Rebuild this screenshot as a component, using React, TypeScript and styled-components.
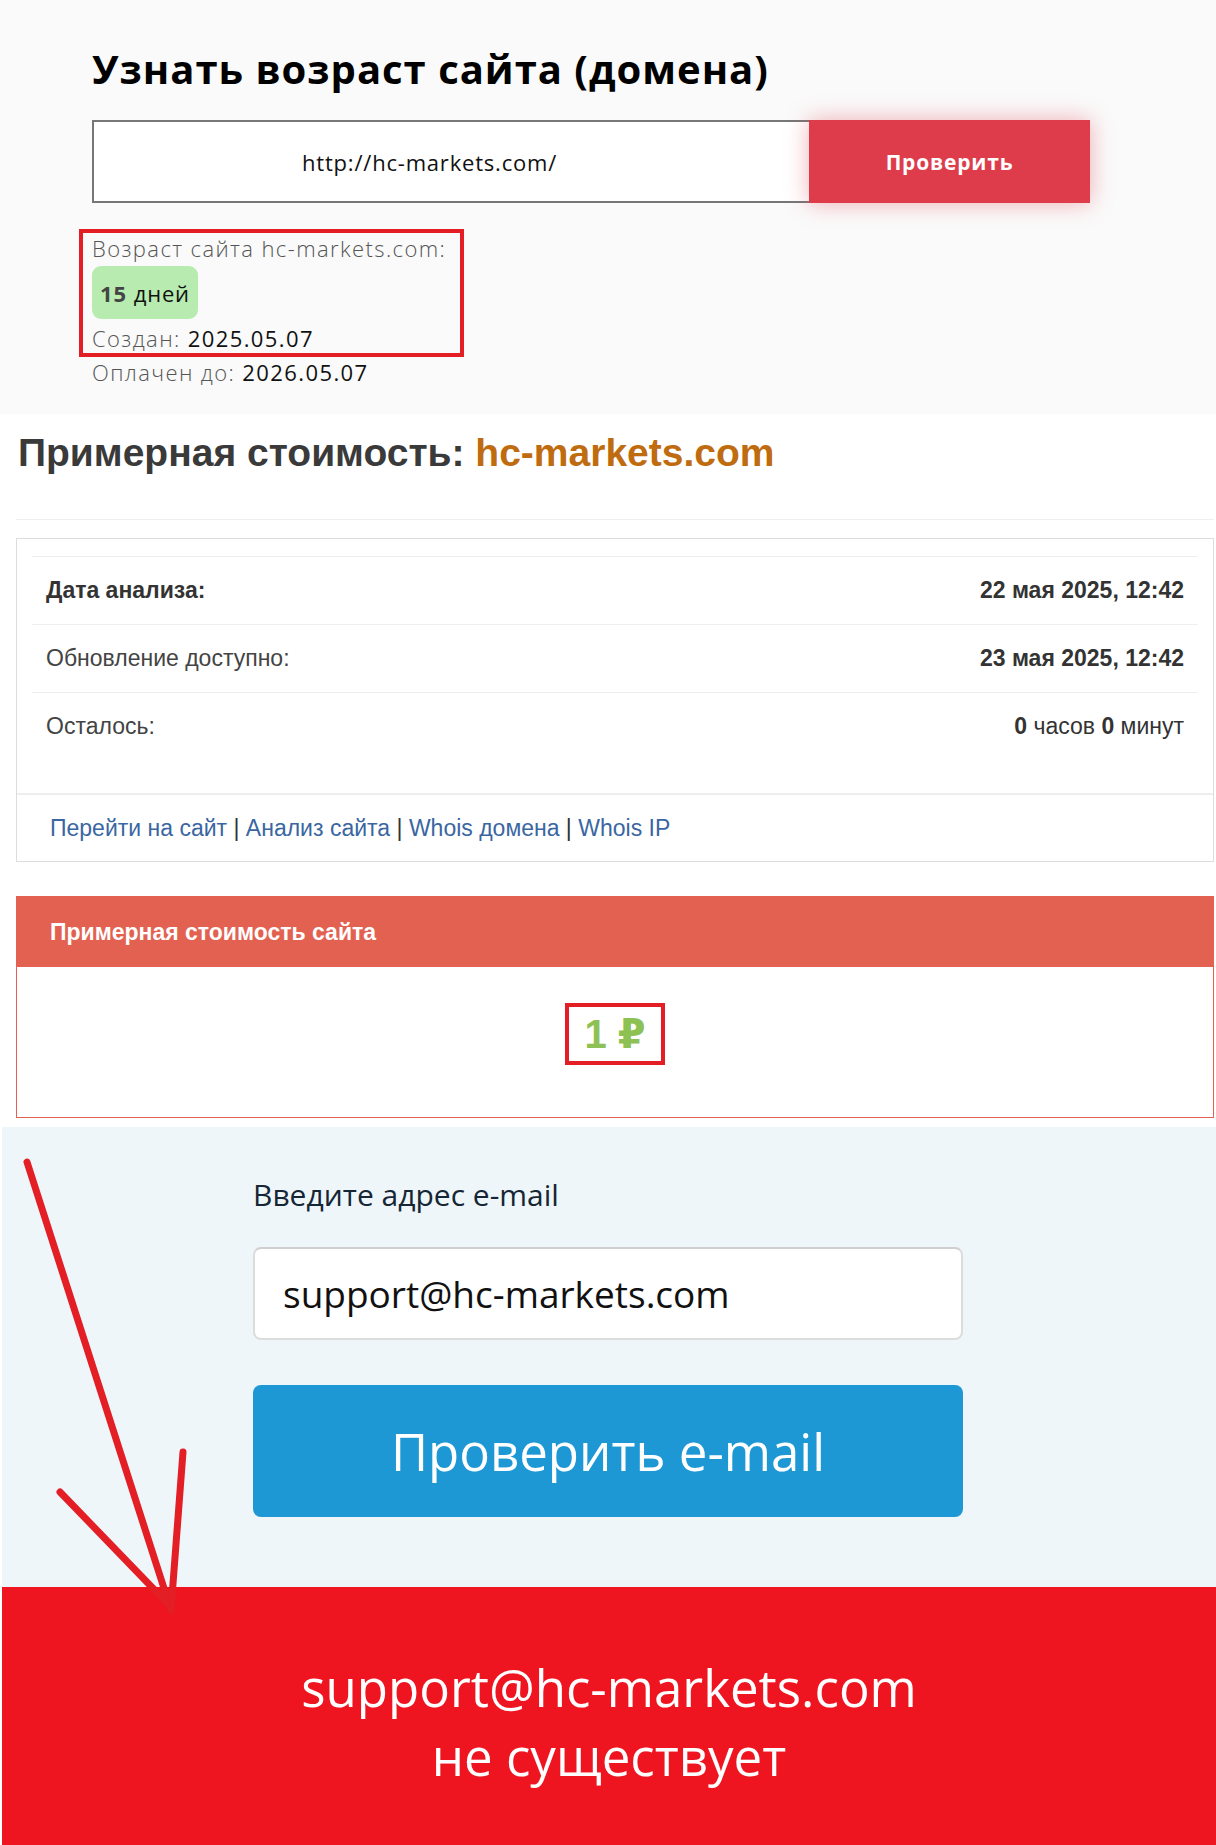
import React from "react";
import styled, { createGlobalStyle } from "styled-components";

const GlobalStyle = createGlobalStyle`
  html, body {
    margin: 0;
    padding: 0;
    background: #ffffff;
  }

  body {
    font-family: "Liberation Sans", Arial, sans-serif;
  }
`;

const annotationRed = "#e31e24";

type Row = {
  label: string;
  value: React.ReactNode;
  strongLabel?: boolean;
};

const rows: Row[] = [
  { label: "Дата анализа:", value: <b>22 мая 2025, 12:42</b>, strongLabel: true },
  { label: "Обновление доступно:", value: <b>23 мая 2025, 12:42</b> },
  {
    label: "Осталось:",
    value: (
      <>
        <b>0</b> часов <b>0</b> минут
      </>
    )
  }
];

const links = ["Перейти на сайт", "Анализ сайта", "Whois домена", "Whois IP"];

export default function App() {
  return (
    <Page>
      <GlobalStyle />

      <AgeSection>
        <AgeTitle>Узнать возраст сайта (домена)</AgeTitle>
        <SearchForm>
          <UrlInput readOnly value="http://hc-markets.com/" />
          <CheckButton type="button">Проверить</CheckButton>
        </SearchForm>
        <Highlight>
          <InfoLine>Возраст сайта hc-markets.com:</InfoLine>
          <AgeBadge>
            <b>15</b> дней
          </AgeBadge>
          <InfoLine>
            Создан: <span>2025.05.07</span>
          </InfoLine>
        </Highlight>
        <InfoLine>
          Оплачен до: <span>2026.05.07</span>
        </InfoLine>
      </AgeSection>

      <PriceSection>
        <PriceTitle>
          Примерная стоимость: <Domain>hc-markets.com</Domain>
        </PriceTitle>
        <Divider />
        <Card>
          <CardBody>
            {rows.map(row => (
              <TableRow key={row.label}>
                <RowLabel strong={row.strongLabel}>{row.label}</RowLabel>
                <RowValue>{row.value}</RowValue>
              </TableRow>
            ))}
          </CardBody>
          <CardFooter>
            {links.map((link, i) => (
              <React.Fragment key={link}>
                {i > 0 && <Separator> | </Separator>}
                <FooterLink href="#">{link}</FooterLink>
              </React.Fragment>
            ))}
          </CardFooter>
        </Card>

        <Panel>
          <PanelHeader>Примерная стоимость сайта</PanelHeader>
          <PanelBody>
            <PriceValue>1 ₽</PriceValue>
          </PanelBody>
        </Panel>
      </PriceSection>

      <EmailSection>
        <EmailForm>
          <EmailLabel>Введите адрес e-mail</EmailLabel>
          <EmailInput readOnly value="support@hc-markets.com" />
          <EmailButton type="button">Проверить e-mail</EmailButton>
        </EmailForm>
      </EmailSection>

      <ResultSection>
        <ResultText>
          support@hc-markets.com
          <br />
          не существует
        </ResultText>
      </ResultSection>

      <Arrow viewBox="0 0 200 490" width="200" height="490">
        <g stroke={annotationRed} strokeWidth="7" strokeLinecap="round" fill="none">
          <line x1="27" y1="22" x2="171" y2="470" />
          <line x1="60" y1="352" x2="171" y2="467" />
          <line x1="183" y1="312" x2="171" y2="470" />
        </g>
      </Arrow>
    </Page>
  );
}

const Page = styled.div`
  position: relative;
  width: 1216px;
  min-height: 1845px;
  background: #ffffff;
  overflow: hidden;
`;

/* --- age check block --- */

const AgeSection = styled.section`
  background: #fafafa;
  height: 414px;
  box-sizing: border-box;
  padding: 46px 0 0 92px;
  font-family: "Open Sans", "Liberation Sans", sans-serif;
`;

const AgeTitle = styled.h1`
  margin: 0;
  font-size: 40px;
  line-height: 46px;
  font-weight: 700;
  color: #000;
  letter-spacing: 1px;
`;

const SearchForm = styled.div`
  display: flex;
  margin-top: 28px;
  height: 83px;
`;

const UrlInput = styled.input`
  width: 717px;
  height: 83px;
  box-sizing: border-box;
  border: 2px solid #777;
  border-right: none;
  background: #fff;
  padding: 0 0 0 208px;
  font-family: "Open Sans", sans-serif;
  font-size: 22px;
  letter-spacing: 0.8px;
  color: #111;
  outline: none;
`;

const CheckButton = styled.button`
  width: 281px;
  height: 83px;
  border: none;
  background: #de3c4b;
  color: #fff;
  font-family: "Open Sans", sans-serif;
  font-weight: 700;
  font-size: 21px;
  letter-spacing: 0.8px;
  box-shadow: 0 0 22px rgba(226, 60, 75, 0.4);
`;

const Highlight = styled.div`
  display: inline-flex;
  flex-direction: column;
  align-items: flex-start;
  margin: 26px 0 0 -13px;
  padding: 0 9px;
  border: 4px solid ${annotationRed};
  width: 385px;
  box-sizing: border-box;
`;

const InfoLine = styled.div`
  font-size: 22px;
  line-height: 30px;
  font-weight: 300;
  letter-spacing: 1.4px;
  color: #555;

  span {
    color: #111;
    font-weight: 500;
  }
`;

const AgeBadge = styled.div`
  display: flex;
  align-items: center;
  gap: 7px;
  margin: 3px 0 4px;
  height: 53px;
  padding: 0 8px;
  border-radius: 9px;
  background: #b7ebb0;
  font-size: 22px;
  letter-spacing: 0.8px;
  color: #111;
  font-weight: 500;

  b {
    color: #444;
    font-weight: 700;
  }
`;

/* --- price block --- */

const PriceSection = styled.section`
  margin-left: 2px;
  padding: 17px 2px 9px 14px;
`;

const PriceTitle = styled.h2`
  margin: 0;
  font-size: 39px;
  line-height: 44px;
  font-weight: 700;
  color: #3a3a3a;
  padding-left: 2px;
`;

const Domain = styled.span`
  color: #bf6c10;
`;

const Divider = styled.hr`
  margin: 44px 0 18px;
  border: none;
  border-top: 1px solid #eee;
`;

const Card = styled.div`
  border: 1px solid #ddd;
`;

const CardBody = styled.div`
  padding: 17px 15px 33px;
`;

const TableRow = styled.div`
  display: flex;
  align-items: center;
  justify-content: space-between;
  height: 67px;
  padding: 0 14px;
  border-top: 1px solid #eee;
  font-size: 23px;
  color: #333;
`;

const RowLabel = styled.span<{ strong?: boolean }>`
  font-weight: ${p => (p.strong ? 700 : 400)};
  color: ${p => (p.strong ? "#333" : "#444")};
`;

const RowValue = styled.span`
  color: #333;
`;

const CardFooter = styled.div`
  height: 66px;
  display: flex;
  align-items: center;
  padding: 0 33px;
  border-top: 2px solid #eee;
  font-size: 23px;
  white-space: pre;
`;

const FooterLink = styled.a`
  color: #3a66a2;
  text-decoration: none;
`;

const Separator = styled.span`
  color: #333;
`;

const Panel = styled.div`
  margin-top: 34px;
  border: 1px solid #e36150;
`;

const PanelHeader = styled.div`
  height: 70px;
  display: flex;
  align-items: center;
  padding: 0 33px;
  background: #e36150;
  color: #fff;
  font-size: 23px;
  font-weight: 700;
`;

const PanelBody = styled.div`
  display: flex;
  justify-content: center;
  padding: 36px 0 52px;
`;

const PriceValue = styled.div`
  width: 100px;
  height: 62px;
  box-sizing: border-box;
  border: 4px solid ${annotationRed};
  display: flex;
  align-items: center;
  justify-content: center;
  font-family: "Liberation Sans", "DejaVu Sans", sans-serif;
  font-size: 40px;
  font-weight: 700;
  color: #8dc153;
`;

/* --- email block --- */

const EmailSection = styled.section`
  margin-left: 2px;
  height: 460px;
  box-sizing: border-box;
  background: #eef6fa;
  padding: 48px 0 0 251px;
  font-family: "Open Sans", sans-serif;
`;

const EmailForm = styled.div`
  width: 710px;
  display: flex;
  flex-direction: column;
`;

const EmailLabel = styled.div`
  font-size: 30px;
  line-height: 40px;
  color: #162634;
  font-weight: 500;
`;

const EmailInput = styled.input`
  margin-top: 32px;
  height: 93px;
  box-sizing: border-box;
  border: 2px solid #dcdcdc;
  border-top-color: #cfcfcf;
  border-radius: 8px;
  background: #fff;
  padding: 0 28px;
  font-family: "Open Sans", sans-serif;
  font-size: 37px;
  color: #111;
  outline: none;
`;

const EmailButton = styled.button`
  margin-top: 45px;
  height: 132px;
  border: none;
  border-radius: 8px;
  background: #1e98d4;
  color: #fff;
  font-family: "Open Sans", sans-serif;
  font-size: 51px;
  font-weight: 500;
`;

/* --- result block --- */

const ResultSection = styled.section`
  margin-left: 2px;
  height: 258px;
  background: #ef1520;
  display: flex;
  justify-content: center;
  padding-top: 66px;
  box-sizing: border-box;
`;

const ResultText = styled.div`
  font-family: "Open Sans", sans-serif;
  font-size: 51px;
  line-height: 69px;
  color: #fff;
  text-align: center;
`;

const Arrow = styled.svg`
  position: absolute;
  left: 0;
  top: 1140px;
  pointer-events: none;
`;
